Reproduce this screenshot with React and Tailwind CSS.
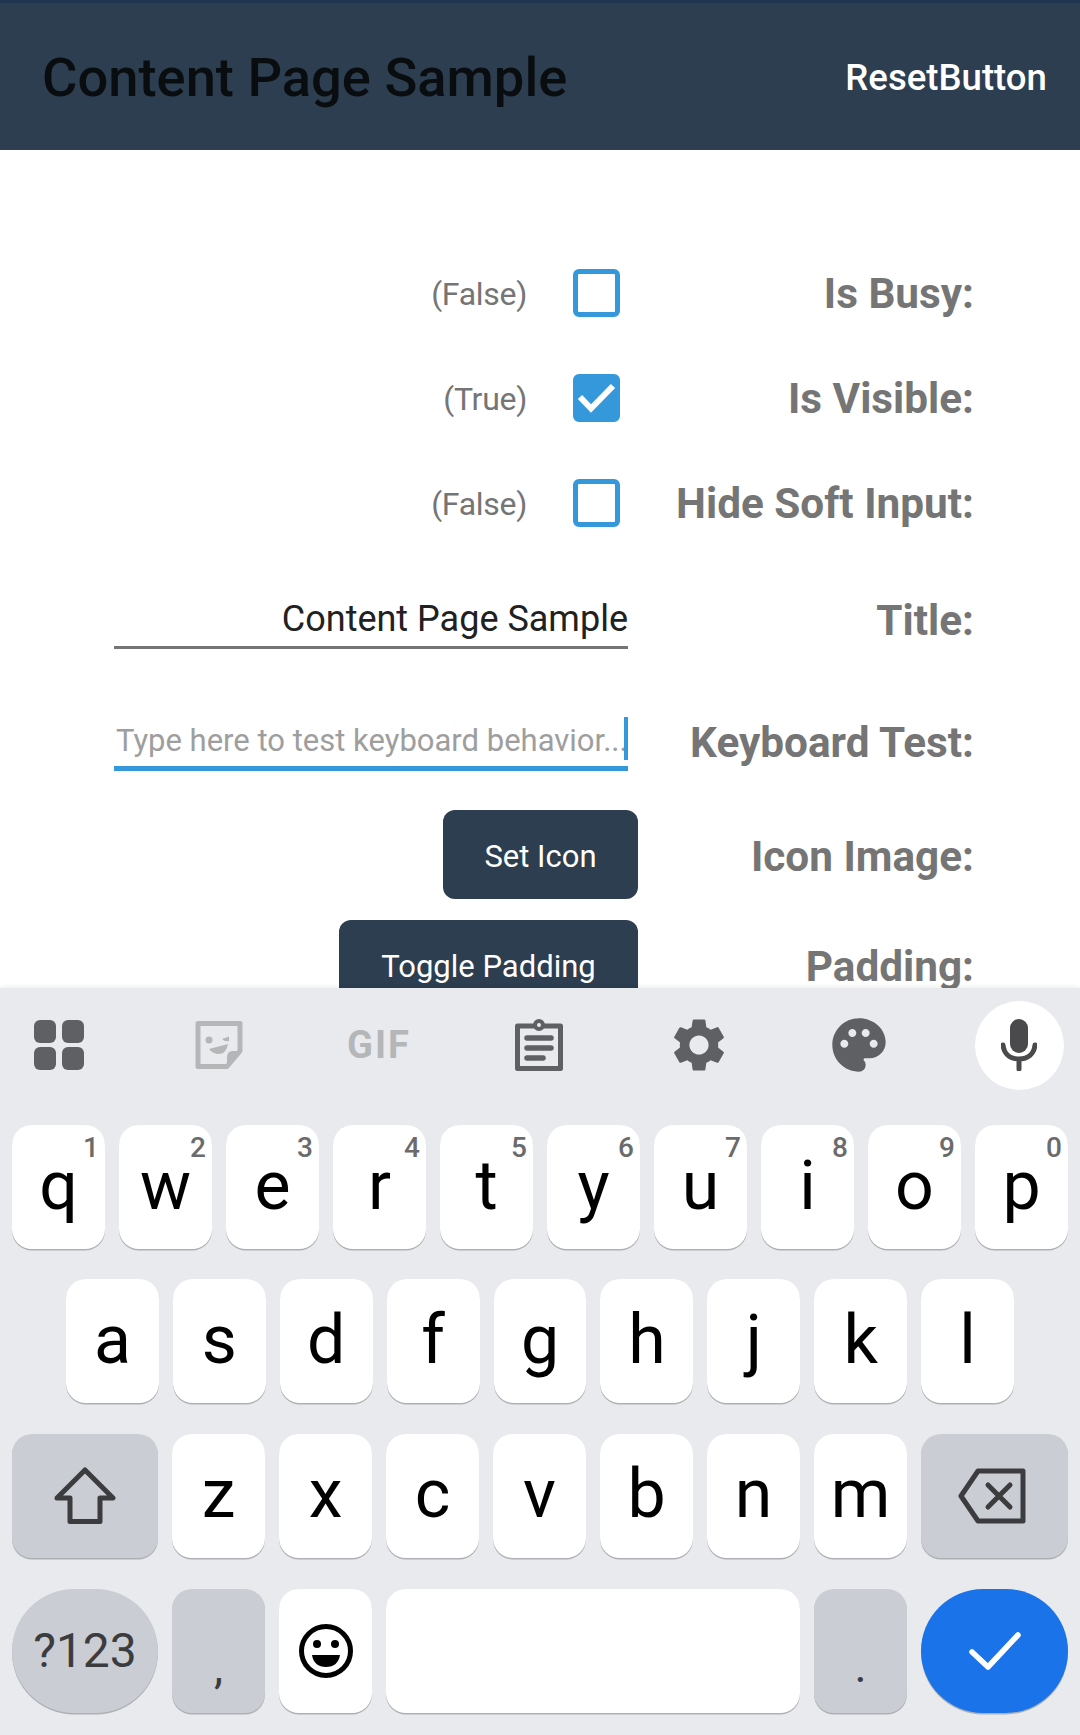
import React from 'react';
import { MdSettings, MdPalette } from 'react-icons/md';

const rowOne = [
  ['q', '1'], ['w', '2'], ['e', '3'], ['r', '4'], ['t', '5'],
  ['y', '6'], ['u', '7'], ['i', '8'], ['o', '9'], ['p', '0'],
];
const rowTwo = ['a', 's', 'd', 'f', 'g', 'h', 'j', 'k', 'l'];
const rowThree = ['z', 'x', 'c', 'v', 'b', 'n', 'm'];

const CheckRow = ({ status, checked, label }) => (
  <FormRow label={label} height="h-[105px]">
    <div className="flex items-center justify-end gap-[46px] pr-[18px]">
      <span className="pt-[3px] text-[32px] tracking-[-0.3px] text-[#757575]">{status}</span>
      <div
        className={`flex h-[48px] w-[47px] items-center justify-center rounded-[6px] border-[5px] border-[#3498db] ${
          checked ? 'bg-[#3498db]' : 'bg-white'
        }`}
      >
        {checked && (
          <svg width="47" height="48" viewBox="0 0 47 48" className="shrink-0">
            <path d="M7 23 L18 34.5 L40 12" fill="none" stroke="white" strokeWidth="6" />
          </svg>
        )}
      </div>
    </div>
  </FormRow>
);

const FormRow = ({ label, height, children }) => (
  <div className={`flex items-center ${height}`}>
    <div className="w-[638px] shrink-0">{children}</div>
    <div className="w-[336px] pt-[3px] text-right text-[42.3px] leading-[50px] font-bold whitespace-nowrap text-[#757575]">
      {label}
    </div>
  </div>
);

const LetterKey = ({ letter, hint }) => (
  <div className="relative flex h-[124px] flex-1 items-center justify-center rounded-[20px] bg-white pb-[3px] text-[68px] leading-none text-black shadow-[0_1.5px_0_#aeb0b3]">
    {letter}
    {hint && (
      <span className="absolute top-[9px] right-[6px] text-[28px] leading-[28px] font-medium text-[#6b6b6b]">
        {hint}
      </span>
    )}
  </div>
);

const GrayKey = ({ className = '', children }) => (
  <div
    className={`flex h-[124px] items-center justify-center bg-[#cacdd4] text-[#3c3c3e] shadow-[0_1.5px_0_#aeb0b3] ${className}`}
  >
    {children}
  </div>
);

const GridIcon = () => (
  <svg width="50" height="50" viewBox="0 0 50 50" fill="#5f6063">
    <rect x="0" y="0" width="22" height="23" rx="6" />
    <rect x="28" y="0" width="22" height="23" rx="6" />
    <rect x="0" y="27" width="22" height="23" rx="6" />
    <rect x="28" y="27" width="22" height="23" rx="6" />
  </svg>
);

const StickerIcon = () => (
  <svg width="48" height="48" viewBox="0 0 48 48" fill="#b5b6b8">
    <path
      d="M3 2.5 H45 V30 L32 45.5 H3 Z"
      fill="none"
      stroke="#b5b6b8"
      strokeWidth="5"
      strokeLinejoin="round"
    />
    <path d="M32 45 V36 Q32 30 38 30 H45 Z" />
    <circle cx="14" cy="19" r="3.5" />
    <path d="M27 18 L34 15.5 L34 20 Q30 21 27 18 Z" />
    <path d="M14 28 L33 23 Q31 34 22 33 Q17 32 14 28 Z" />
  </svg>
);

const ClipboardIcon = () => (
  <svg width="48" height="54" viewBox="0 0 48 54" fill="none" stroke="#5f6063">
    <path d="M2.5 8 H45.5 V50.5 H2.5 Z" strokeWidth="5" strokeLinejoin="round" />
    <circle cx="24" cy="7" r="4" strokeWidth="4" fill="#e8eaed" />
    <path d="M12 20 H36 M12 30 H36" strokeWidth="5.5" strokeLinecap="round" />
    <path d="M12 40 H28" strokeWidth="5.5" strokeLinecap="round" />
  </svg>
);

const MicIcon = () => (
  <svg width="36" height="52" viewBox="0 0 36 52" fill="none">
    <rect x="9" y="0" width="18" height="34" rx="9" fill="#4a4a4c" />
    <path
      d="M2 26 C3 35 9 40 18 40 C27 40 33 35 34 26 M18 40 V50"
      stroke="#4a4a4c"
      strokeWidth="5"
      strokeLinecap="round"
    />
  </svg>
);

const ShiftIcon = () => (
  <svg width="62" height="58" viewBox="0 0 62 58" fill="none">
    <path
      d="M31 3 L59 31 H46 V54.5 H16 V31 H3 Z"
      stroke="#3c3c3e"
      strokeWidth="5"
      strokeLinejoin="round"
    />
  </svg>
);

const BackspaceIcon = () => (
  <svg width="68" height="56" viewBox="0 0 68 56" fill="none" stroke="#3c3c3e" strokeWidth="5">
    <path d="M20 3 H65 V53 H20 L3 28 Z" strokeLinejoin="round" />
    <path d="M30 17 L52 39 M52 17 L30 39" strokeLinecap="round" />
  </svg>
);

const EmojiIcon = () => (
  <svg width="54" height="54" viewBox="0 0 54 54">
    <circle cx="27" cy="27" r="24.5" fill="none" stroke="black" strokeWidth="5" />
    <circle cx="18" cy="20" r="4" />
    <circle cx="36" cy="20" r="4" />
    <path d="M13 31 H41 Q39 43 27 43 Q15 43 13 31 Z" />
  </svg>
);

const EnterCheck = () => (
  <svg width="52" height="38" viewBox="0 0 52 38" fill="none">
    <path
      d="M3 20 L19 35 L49 3"
      stroke="white"
      strokeWidth="5.5"
      strokeLinecap="round"
      strokeLinejoin="round"
    />
  </svg>
);

const ToolbarCell = ({ children }) => (
  <div className="flex h-[100px] w-[100px] shrink-0 items-center justify-center">{children}</div>
);

const App = () => {
  return (
    <div className="flex h-[1735px] w-[1080px] flex-col overflow-hidden bg-white font-['Roboto',sans-serif]">
      {/* App bar */}
      <header className="flex h-[150px] shrink-0 items-center justify-between border-t-[3px] border-[#1f3550] bg-[#2c3e50] pt-[4px] pr-[33px] pl-[42px]">
        <h1 className="text-[54.3px] leading-none font-medium text-[#0a0d10]">Content Page Sample</h1>
        <button className="text-[36.6px] leading-none font-medium text-white">ResetButton</button>
      </header>

      {/* Form, cut off by the keyboard */}
      <main className="h-[838px] shrink-0 overflow-hidden pt-[90px]">
        <CheckRow status="(False)" label="Is Busy:" />
        <CheckRow status="(True)" checked label="Is Visible:" />
        <CheckRow status="(False)" label="Hide Soft Input:" />

        <FormRow label="Title:" height="h-[128px]">
          <div className="ml-[114px] flex h-[60px] w-[514px] items-center justify-end border-b-[3px] border-[#757575] pt-[2px] text-[36px] leading-none text-[#212121]">
            Content Page Sample
          </div>
        </FormRow>

        <FormRow label="Keyboard Test:" height="h-[117px]">
          <div className="relative ml-[114px] flex h-[58px] w-[514px] items-center overflow-hidden border-b-[5px] border-[#3498db] pt-[2px] pl-[2px] text-[31px] leading-none whitespace-nowrap text-[#9e9e9e]">
            Type here to test keyboard behavior...
            <span className="absolute top-[4px] right-0 h-[43px] w-[4px] bg-[#3498db]" />
          </div>
        </FormRow>

        <FormRow label="Icon Image:" height="h-[110px]">
          <div className="flex justify-end pb-[2px]">
            <button className="h-[89px] w-[195px] rounded-[12px] bg-[#2c3e50] pt-[6px] text-[31px] text-white">
              Set Icon
            </button>
          </div>
        </FormRow>

        <FormRow label="Padding:" height="h-[111px]">
          <div className="flex justify-end pb-[2px]">
            <button className="h-[89px] w-[299px] rounded-[12px] bg-[#2c3e50] pt-[5px] text-[31px] text-white">
              Toggle Padding
            </button>
          </div>
        </FormRow>
      </main>

      {/* Soft keyboard */}
      <section className="flex h-[747px] shrink-0 flex-col bg-[#e8eaed] shadow-[0_-2px_4px_rgba(0,0,0,0.06)]">
        <div className="h-[137px] shrink-0">
          <div className="flex h-[114px] items-center gap-[60px] pl-[9px]">
            <ToolbarCell>
              <GridIcon />
            </ToolbarCell>
            <ToolbarCell>
              <StickerIcon />
            </ToolbarCell>
            <ToolbarCell>
              <span className="text-[38px] leading-none font-bold tracking-[2px] text-[#b5b6b8]">GIF</span>
            </ToolbarCell>
            <ToolbarCell>
              <ClipboardIcon />
            </ToolbarCell>
            <ToolbarCell>
              <MdSettings size={64} color="#5f6063" />
            </ToolbarCell>
            <ToolbarCell>
              <MdPalette size={64} color="#5f6063" />
            </ToolbarCell>
            <ToolbarCell>
              <div className="flex h-[89px] w-[89px] items-center justify-center rounded-full bg-white">
                <MicIcon />
              </div>
            </ToolbarCell>
          </div>
        </div>

        <div className="flex flex-col gap-[30.4px] px-[12px]">
          <div className="flex gap-[14px]">
            {rowOne.map(([letter, hint]) => (
              <LetterKey key={letter} letter={letter} hint={hint} />
            ))}
          </div>

          <div className="flex gap-[14px] px-[54px]">
            {rowTwo.map((letter) => (
              <LetterKey key={letter} letter={letter} />
            ))}
          </div>

          <div className="flex gap-[14px]">
            <GrayKey className="w-[146px] rounded-[20px]">
              <ShiftIcon />
            </GrayKey>
            {rowThree.map((letter) => (
              <LetterKey key={letter} letter={letter} />
            ))}
            <GrayKey className="w-[147px] rounded-[20px] pr-[6px]">
              <BackspaceIcon />
            </GrayKey>
          </div>

          <div className="mt-[1px] flex gap-[14px]">
            <GrayKey className="w-[146px] rounded-full text-[48px] leading-none">?123</GrayKey>
            <GrayKey className="w-[93px] rounded-[20px] pt-[32px] text-[46px] leading-none">,</GrayKey>
            <div className="flex h-[124px] w-[93px] items-center justify-center rounded-[20px] bg-white shadow-[0_1.5px_0_#aeb0b3]">
              <EmojiIcon />
            </div>
            <div className="h-[124px] flex-1 rounded-[20px] bg-white shadow-[0_1.5px_0_#aeb0b3]" />
            <GrayKey className="w-[93px] rounded-[20px] pt-[30px] text-[46px] leading-none">.</GrayKey>
            <div className="flex h-[124px] w-[147px] items-center justify-center rounded-full bg-[#1a73e8] shadow-[0_1.5px_0_#aeb0b3]">
              <EnterCheck />
            </div>
          </div>
        </div>
      </section>
    </div>
  );
};

export default App;
